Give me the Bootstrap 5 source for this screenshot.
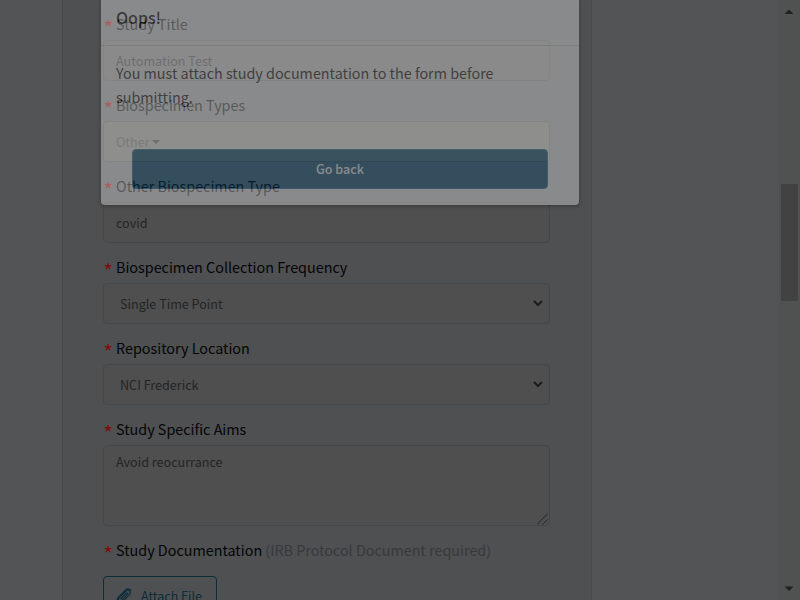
<!DOCTYPE html>
<html lang="en">
<head>
<meta charset="utf-8">
<title>Study form</title>
<link rel="stylesheet" href="https://cdn.jsdelivr.net/npm/bootstrap@5.3.0/dist/css/bootstrap.min.css">
<style>
html,body{height:100%;overflow:hidden}
body{background:#525456;font-family:"Noto Sans CJK SC","Noto Sans",sans-serif;color:#050506}
.app{width:800px;height:600px}
.page-pane{width:779px}
.form-panel{width:530px;margin-left:62px;height:600px;padding:9px 41px 0 40px;background:#4e5052;border:solid #48494a;border-width:0 1px}
.field{height:81px}
.field.tall{height:121px}
.field-label{height:31px;line-height:30px;font-size:14.35px;padding-left:1px;white-space:nowrap}
.req{display:inline-block;width:12px;vertical-align:top;line-height:37px;color:#830a0c;font-size:20px;text-indent:-.5px}
.field-box{width:447px;height:41px;border:1px solid #464748;border-radius:4px;background:#4f4f4f;color:#232425;font-size:12.6px;line-height:20px;padding:10px 12px 8px}
.field-box.pick{padding:9px 6px 9px 16px}
.field-box.other-box{padding:9px 12px}
.field-box.area{height:81px;padding:6px 12px;position:relative}
.grip{position:absolute;right:1px;bottom:0}
.dim{color:#242526}
.faint{color:#353637}
.other-box{background:#555753}
.note{color:#38393b}
.attach{width:114px;height:41px;border:1px solid #0c2c39;border-radius:4px;color:#0c2c39;font-size:12.5px;line-height:37px;padding:0 0 2px 12px;gap:9px;margin-top:10px}
.caret{width:0;height:0;border:4px solid transparent;border-top-color:#242526;border-bottom:0;margin-left:2px}
.scroll{width:21px;background:#505151;border-left:1px solid #4e5051;padding-left:1px}
.thumb{width:17px;height:117px;background:#424242}
.dialog-fade{left:101px;top:-3px;width:478px;height:207.5px;background:#fff;opacity:.335;border-radius:0 0 4px 4px}
.dialog-shadow{left:101px;top:-3px;width:478px;height:207.5px;border-radius:4px;box-shadow:0 1px 4px rgba(0,0,0,.3);clip-path:inset(0 -10px -10px -10px)}
.dialog-title{height:49px;padding:8px 15px;font-size:16px;font-weight:500;line-height:25px;border-bottom:1px solid #ddd;color:#111}
.dialog-copy{font-size:14.35px;line-height:24px;padding:15px 15px 0;height:103px;color:#222}
.go-back{display:block;width:416px;height:40px;margin-left:31px;background:#064b73;border:1px solid #2e6da4;border-radius:4px;color:#fff;font-size:12.5px;font-weight:500;line-height:38px;padding:0}
</style>
</head>
<body>
<div class="app d-flex position-relative overflow-hidden">
  <main class="page-pane flex-shrink-0">
    <div class="form-panel">
      <div class="field"><div class="field-label"><span class="req">*</span>Study Title</div><div class="field-box dim">Automation Test</div></div>
      <div class="field"><div class="field-label"><span class="req">*</span>Biospecimen Types</div><div class="field-box faint other-box d-flex align-items-center">Other<span class="caret"></span></div></div>
      <div class="field"><div class="field-label"><span class="req">*</span>Other Biospecimen Type</div><div class="field-box">covid</div></div>
      <div class="field"><div class="field-label"><span class="req">*</span>Biospecimen Collection Frequency</div><div class="field-box pick d-flex align-items-center justify-content-between"><span>Single Time Point</span><svg width="10" height="9" viewBox="0 0 10 9" fill="none" stroke="#1c1c1c" stroke-width="2"><path d="M1 2l4 4 4-4"/></svg></div></div>
      <div class="field"><div class="field-label"><span class="req">*</span>Repository Location</div><div class="field-box pick d-flex align-items-center justify-content-between"><span>NCI Frederick</span><svg width="10" height="9" viewBox="0 0 10 9" fill="none" stroke="#1c1c1c" stroke-width="2"><path d="M1 2l4 4 4-4"/></svg></div></div>
      <div class="field tall"><div class="field-label"><span class="req">*</span>Study Specific Aims</div><div class="field-box area">Avoid reocurrance<svg class="grip" width="11" height="11" viewBox="0 0 11 11" stroke="#181818" stroke-width=".8"><path d="M0 10.5L10.5 0M5.5 10.5l5-5"/></svg></div></div>
      <div class="field-label"><span class="req">*</span>Study Documentation <span class="note">(IRB Protocol Document required)</span></div>
      <div class="attach d-flex align-items-center"><svg width="16" height="16" viewBox="0 0 16 16" fill="none" stroke="#0c2c39" stroke-width="1.1" stroke-linecap="round"><path d="M4.800 10.800L10.300 5.200c1-1 2.200.2 1.200 1.200l-6 6.100c-1.900 1.900-4.300-.5-2.400-2.400L9.700 3.300c2.800-2.700 6.300.8 3.600 3.600L7.200 13.200c-3.700 3.600-8-.8-4.500-4.400l6.600-6.700c1.900-1.800 4.300-1.500 5.600.3"/></svg><span>Attach File</span></div>
    </div>
  </main>
  <aside class="scroll flex-grow-1 d-flex flex-column">
    <svg width="17" height="184" viewBox="0 0 17 184"><path d="M3.500 14L8 9.500l4.500 4.500z" fill="#202020"/></svg>
    <div class="thumb"></div>
    <svg width="17" height="299" viewBox="0 0 17 299"><path d="M3.500 285.500h9L8 290z" fill="#202020"/></svg>
  </aside>
  <div class="dialog-shadow position-absolute"></div>
  <section class="dialog-fade position-absolute">
    <div class="dialog-title">Oops!</div>
    <div class="dialog-copy">You must attach study documentation to the form before submitting.</div>
    <button class="go-back">Go back</button>
  </section>
</div>
<script src="https://cdn.jsdelivr.net/npm/bootstrap@5.3.0/dist/js/bootstrap.bundle.min.js"></script>
</body>
</html>
